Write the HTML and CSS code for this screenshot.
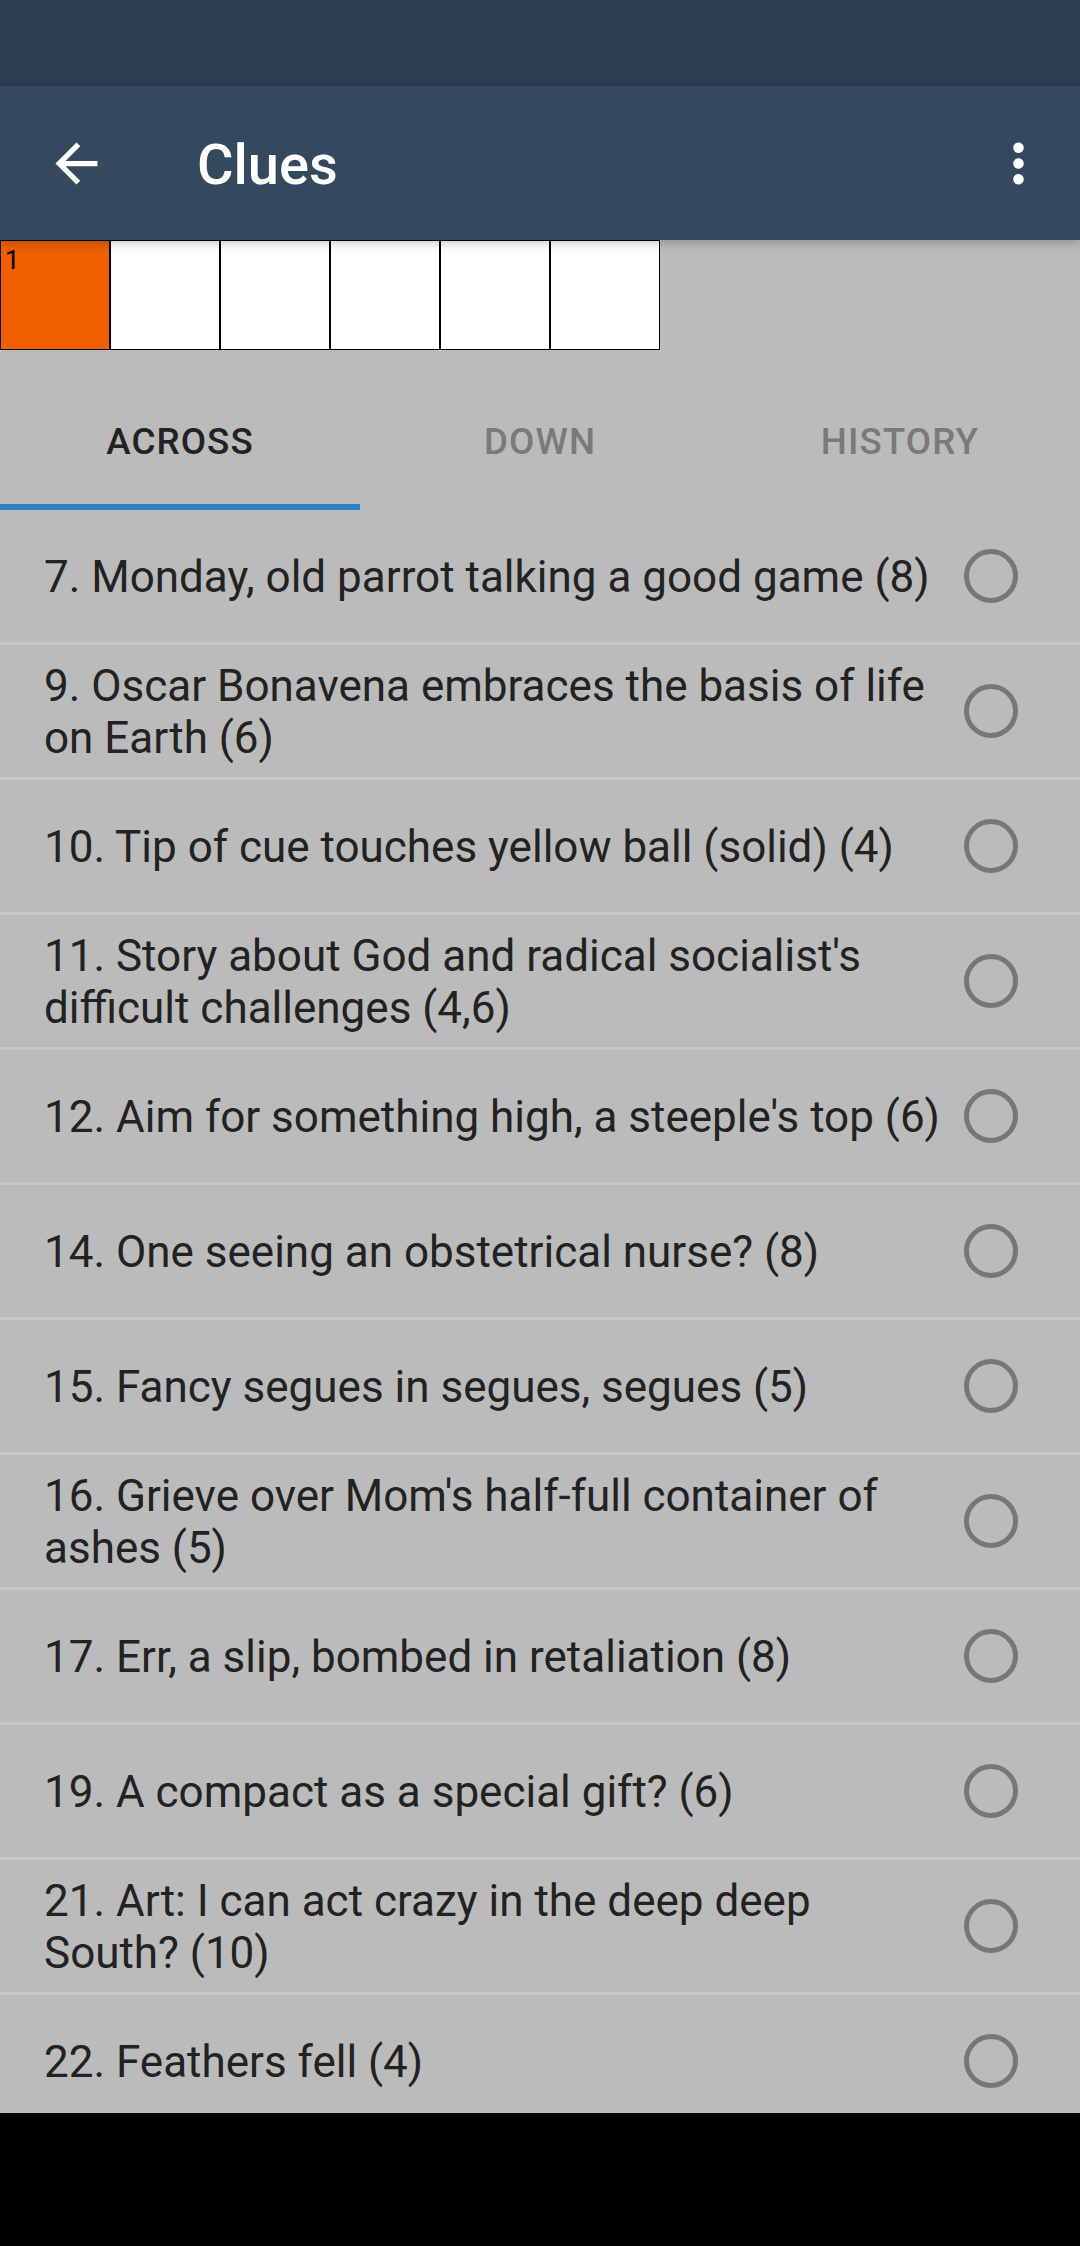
FILE: index.html
```html
<!DOCTYPE html>
<html lang="en">
<head>
<meta charset="utf-8">
<title>Clues</title>
<link rel="stylesheet" href="styles.css">
</head>
<body>
<div class="screen">
  <div class="status"></div>
  <header class="appbar">
    <svg class="icon" viewBox="0 0 24 24"><path fill="#fff" d="M20 11H7.83l5.59-5.59L12 4l-8 8 8 8 1.41-1.41L7.83 13H20v-2z"/></svg>
    <h1 class="title">Clues</h1>
    <svg class="icon menu" viewBox="0 0 24 24"><path fill="#fff" d="M12 8c1.1 0 2-.9 2-2s-.9-2-2-2-2 .9-2 2 .9 2 2 2zm0 2c-1.1 0-2 .9-2 2s.9 2 2 2 2-.9 2-2-.9-2-2-2zm0 6c-1.1 0-2 .9-2 2s.9 2 2 2 2-.9 2-2-.9-2-2-2z"/></svg>
  </header>
  <div class="board">
    <div class="cell active"><span class="num">1</span></div>
    <div class="cell"></div>
    <div class="cell"></div>
    <div class="cell"></div>
    <div class="cell"></div>
    <div class="cell"></div>
  </div>
  <nav class="tabs">
    <div class="tab selected">ACROSS</div>
    <div class="tab">DOWN</div>
    <div class="tab">HISTORY</div>
  </nav>
  <main class="list">
    <div class="row"><div class="text">7. Monday, old parrot talking a good game (8)</div><div class="radio"></div></div>
    <div class="row"><div class="text">9. Oscar Bonavena embraces the basis of life on Earth (6)</div><div class="radio"></div></div>
    <div class="row"><div class="text">10. Tip of cue touches yellow ball (solid) (4)</div><div class="radio"></div></div>
    <div class="row"><div class="text">11. Story about God and radical socialist's difficult challenges (4,6)</div><div class="radio"></div></div>
    <div class="row"><div class="text">12. Aim for something high, a steeple's top (6)</div><div class="radio"></div></div>
    <div class="row"><div class="text">14. One seeing an obstetrical nurse? (8)</div><div class="radio"></div></div>
    <div class="row"><div class="text">15. Fancy segues in segues, segues (5)</div><div class="radio"></div></div>
    <div class="row"><div class="text">16. Grieve over Mom's half-full container of ashes (5)</div><div class="radio"></div></div>
    <div class="row"><div class="text">17. Err, a slip, bombed in retaliation (8)</div><div class="radio"></div></div>
    <div class="row"><div class="text">19. A compact as a special gift? (6)</div><div class="radio"></div></div>
    <div class="row"><div class="text">21. Art: I can act crazy in the deep deep South? (10)</div><div class="radio"></div></div>
    <div class="row"><div class="text">22. Feathers fell (4)</div><div class="radio"></div></div>
  </main>
  <div class="navbar"></div>
</div>
</body>
</html>
```

FILE: styles.css
```css
html, body {
  margin: 0;
  padding: 0;
}
body {
  background: #000;
  font-family: Roboto, "Noto Sans", "Liberation Sans", sans-serif;
}
.screen {
  width: 1080px;
  height: 2246px;
  overflow: hidden;
  display: flex;
  flex-direction: column;
  background: #bbbbbb;
}
.status {
  height: 86px;
  flex: none;
  background: #2d3e50;
}
.appbar {
  height: 154px;
  flex: none;
  background: #34495e;
  display: flex;
  align-items: center;
  padding-left: 45px;
  padding-right: 30px;
  position: relative;
  z-index: 2;
  box-shadow: 0 3px 10px rgba(0, 0, 0, 0.22);
}
.icon {
  width: 63px;
  height: 63px;
  flex: none;
  display: block;
}
.title {
  margin: 4px 0 0 89px;
  flex: 1;
  color: #fff;
  font-size: 56px;
  font-weight: 500;
  line-height: 64px;
}
.board {
  height: 110px;
  flex: none;
  display: flex;
}
.cell {
  width: 110px;
  height: 110px;
  box-sizing: border-box;
  border: 1px solid #000;
  background: #fff;
  position: relative;
}
.cell.active {
  background: #f06000;
}
.num {
  position: absolute;
  left: 4px;
  top: 6px;
  font-size: 26px;
  line-height: 26px;
  color: #000;
}
.tabs {
  height: 160px;
  flex: none;
  display: flex;
}
.tab {
  flex: 1;
  box-sizing: border-box;
  height: 160px;
  padding-top: 70px;
  line-height: 44px;
  text-align: center;
  font-size: 36.75px;
  font-weight: 500;
  letter-spacing: 1.1px;
  color: #7a7a7a;
  border-bottom: 6px solid transparent;
}
.tab.selected {
  color: #222;
  border-bottom-color: #2a82c0;
}
.list {
  height: 1603px;
  flex: none;
  overflow: hidden;
}
.row {
  height: 132px;
  border-bottom: 3px solid #c6c6c6;
  display: flex;
  align-items: center;
  padding-left: 44px;
}
.text {
  flex: 1;
  margin-right: 14px;
  padding-top: 2px;
  font-size: 44px;
  line-height: 52px;
  color: #222;
}
.radio {
  width: 54px;
  height: 54px;
  box-sizing: border-box;
  border: 5px solid #777;
  border-radius: 50%;
  flex: none;
  margin-right: 62px;
}
.navbar {
  flex: 1;
  background: #000;
}
```
